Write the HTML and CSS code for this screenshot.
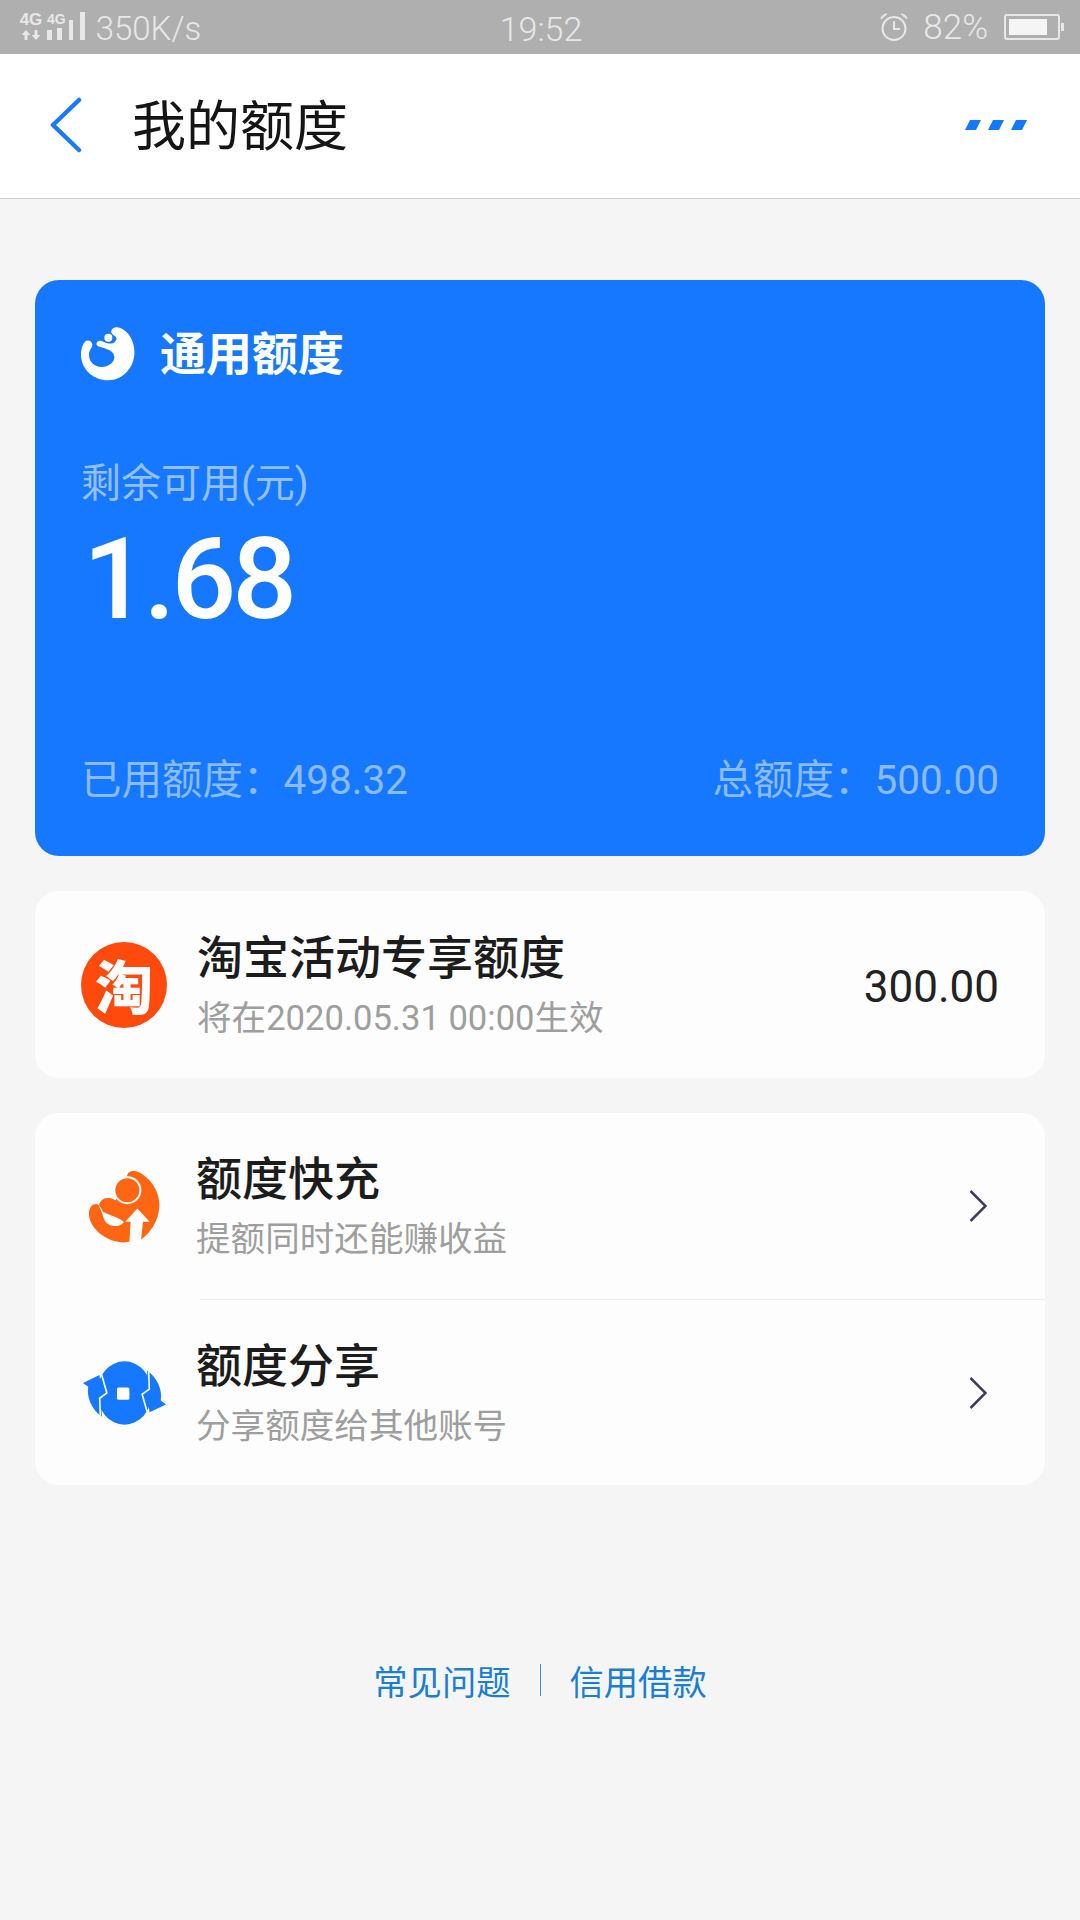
FILE: index.html
```html
<!DOCTYPE html>
<html lang="zh-CN">
<head>
  <meta charset="UTF-8">
  <title>我的额度</title>
  <link rel="stylesheet" href="styles.css">
</head>
<body>
  <div class="statusbar">
    <div class="status-left">
      <div class="net">
        <div class="net-big">4G</div>
        <svg class="net-arrows" width="20" height="10" viewBox="0 0 20 10"><path d="M5 0l4.500 5H6.500v5h-3V5H.5zM15 10l-4.500-5h3V0h3v5h3z" fill="#e8e8e8"/></svg>
      </div>
      <div class="net-small">4G</div>
      <svg class="signal" width="38" height="28" viewBox="0 0 38 28"><path d="M0 18h5v10H0zM10 16h5v12h-5zM22 8h4v20h-4zM33 0h5v28h-5z" fill="#e8e8e8"/></svg>
      <span class="speed">350K/s</span>
    </div>
    <div class="status-time">19:52</div>
    <div class="status-right">
      <svg width="28" height="28" viewBox="0 0 28 28" fill="none" stroke="#e8e8e8"><circle cx="14" cy="15.500" r="11.500" stroke-width="2"/><path d="M14 8v8h6" stroke-width="2"/><path d="M1 6c0-3 3-5 6-5zM27 6c0-3-3-5-6-5z" fill="#e8e8e8" stroke-width="1"/></svg>
      <span class="pct">82%</span>
      <div class="battery"><div class="battery-fill"></div></div>
      <div class="battery-nub"></div>
    </div>
  </div>

  <div class="navbar">
    <svg class="back" width="32" height="56" viewBox="0 0 32 56" fill="none"><path d="M29 3L3 28l26 25" stroke="#1a7afa" stroke-width="4.500" stroke-linecap="round" stroke-linejoin="round"/></svg>
    <div class="nav-title">我的额度</div>
    <svg class="more" width="62" height="10" viewBox="0 0 62 10"><path d="M5 0h11l-5 10H0zM28 0h11l-5 10H23zM51 0h11l-5 10H46z" fill="#1677ff"/></svg>
  </div>

  <div class="main">
    <div class="card quota">
      <div class="quota-head">
        <svg width="54" height="55" viewBox="18 18 162 165"><path d="M112 24C120 16 135 18 148 28 170 44 180 75 178 100 175 145 140 178 100 178 55 178 20 145 18 105 17 88 22 70 30 62 38 55 50 60 52 70 53 80 42 85 42 102 42 122 58 138 80 138 100 138 118 125 118 108 118 92 100 85 85 80 75 77 62 76 65 66 67 58 78 58 85 62 95 67 110 72 120 62 128 54 125 48 115 42 108 37 106 30 112 24Z" fill="#fff"/><circle cx="100" cy="50" r="12" fill="#fff"/></svg>
        <div class="quota-name">通用额度</div>
      </div>
      <div class="quota-label">剩余可用(元)</div>
      <div class="quota-amount">1.68</div>
      <div class="quota-foot">
        <span>已用额度：498.32</span>
        <span>总额度：500.00</span>
      </div>
    </div>

    <div class="card row row-taobao">
      <div class="taobao-logo">淘</div>
      <div class="row-text">
        <div class="row-title">淘宝活动专享额度</div>
        <div class="row-sub">将在2020.05.31 00:00生效</div>
      </div>
      <div class="row-value">300.00</div>
    </div>

    <div class="card">
      <div class="row">
        <div class="row-icon">
          <svg width="71" height="73" viewBox="55 60 213 218"><path d="M172 70C180 58 200 62 215 72 250 95 268 135 266 170 264 210 240 250 208 270L160 277C110 275 60 240 55 195 53 170 70 155 85 165 88 150 105 135 135 150z" fill="#ff6614"/><path d="M84 165C92 172 94 178 96 184 110 192 130 198 150 208L160 216C145 232 118 232 104 214 98 204 96 190 84 165z" fill="#fff"/><circle cx="170" cy="120" r="42" fill="#fff"/><circle cx="170" cy="120" r="36" fill="#ff6614"/><path d="M200 175l37 40h-20l-7 62-34 2 4-64h-16z" fill="#fff"/></svg>
        </div>
        <div class="row-text">
          <div class="row-title">额度快充</div>
          <div class="row-sub">提额同时还能赚收益</div>
        </div>
        <svg class="chevron" width="18" height="32" viewBox="0 0 18 32" fill="none"><path d="M1.500 1l15 15-15 15" stroke="#3e3e5c" stroke-width="2.500"/></svg>
      </div>
      <div class="divider"></div>
      <div class="row">
        <div class="row-icon">
          <svg width="85" height="64" viewBox="32 88 260 196"><ellipse cx="162" cy="186" rx="84" ry="97" fill="#1677ff"/><path d="M35 155l50-24 8 50 14-4-18 24 4 58c-32-22-48-62-42-92z" fill="#1677ff"/><path d="M289 221l-50 24-8-50-14 4 18-24-4-58c32 22 48 62 42 92z" fill="#1677ff"/><path d="M92 130l16 56-22 16 2 54M232 246l-16-56 22-16-2-54" fill="none" stroke="#fff" stroke-width="5"/><rect x="139" y="169" width="38" height="38" rx="5" fill="#fff"/></svg>
        </div>
        <div class="row-text">
          <div class="row-title">额度分享</div>
          <div class="row-sub">分享额度给其他账号</div>
        </div>
        <svg class="chevron" width="18" height="32" viewBox="0 0 18 32" fill="none"><path d="M1.500 1l15 15-15 15" stroke="#3e3e5c" stroke-width="2.500"/></svg>
      </div>
    </div>

    <div class="links">
      <span>常见问题</span>
      <i class="links-sep"></i>
      <span>信用借款</span>
    </div>
  </div>
</body>
</html>
```

FILE: styles.css
```css
* {
  box-sizing: border-box;
}
body {
  margin: 0;
  width: 1080px;
  height: 1920px;
  overflow: hidden;
  background: #f5f5f5;
  font-family: Roboto, "Noto Sans CJK SC", sans-serif;
  color: #1c1c1c;
}

.statusbar {
  display: grid;
  grid-template-columns: 1fr auto 1fr;
  align-items: center;
  height: 54px;
  padding: 0 16px 0 18px;
  background: #afafaf;
  color: #e8e8e8;
  font-family: Roboto, sans-serif;
  font-weight: 300;
  font-size: 34px;
}
.status-left {
  display: flex;
  align-items: flex-start;
  height: 54px;
}
.status-time {
  padding-top: 3px;
}
.net {
  display: flex;
  flex-direction: column;
  align-items: center;
  width: 26px;
  margin: 12px 2px 0 0;
}
.net-big {
  font-family: "Liberation Sans", sans-serif;
  font-weight: 700;
  font-size: 17px;
  line-height: 16px;
}
.net-arrows {
  margin-top: 2px;
}
.net-small {
  margin: 12px 0 0 1px;
  font-family: "Liberation Sans", sans-serif;
  font-weight: 700;
  font-size: 14px;
  line-height: 14px;
}
.signal {
  margin: 12px 0 0 -19px;
}
.speed {
  margin: 9px 0 0 11px;
  font-size: 33px;
  line-height: 40px;
}
.status-right {
  display: flex;
  align-items: center;
  justify-content: flex-end;
}
.pct {
  margin: 0 16px 0 15px;
  font-size: 35px;
}
.battery {
  width: 56px;
  height: 26px;
  padding: 3px;
  border: 2px solid #e8e8e8;
  border-radius: 3px;
}
.battery-fill {
  width: 82%;
  height: 100%;
  background: #f5f5f5;
}
.battery-nub {
  width: 3px;
  height: 8px;
  margin-left: 1px;
  background: #e8e8e8;
}

.navbar {
  display: flex;
  align-items: center;
  height: 145px;
  padding: 0 53px 0 50px;
  background: #fff;
  border-bottom: 1px solid #cfcfcf;
}
.back {
  margin-top: -2px;
}
.nav-title {
  margin: 0 0 8px 50px;
  font-family: "Noto Sans CJK SC", sans-serif;
  font-size: 54px;
  color: #151515;
}
.more {
  margin-left: auto;
  margin-top: -3px;
}

.main {
  display: flex;
  flex-direction: column;
  gap: 35px;
  padding: 81px 35px 0;
}
.card {
  background: #fdfdfd;
  border-radius: 24px;
}

.quota {
  display: flex;
  flex-direction: column;
  height: 576px;
  padding: 46px 46px 0;
  background: #1677ff;
  color: #fff;
}
.quota-head {
  display: flex;
  align-items: center;
  height: 56px;
}
.quota-name {
  margin: 0 0 9px 25px;
  font-family: "Noto Sans CJK SC", sans-serif;
  font-size: 46px;
  font-weight: 700;
}
.quota-label {
  margin-top: 75px;
  font-size: 40px;
  line-height: 54px;
  color: rgba(255, 255, 255, 0.55);
}
.quota-amount {
  margin: 10px 0 0 2px;
  font-family: Roboto, sans-serif;
  font-weight: 500;
  font-size: 114px;
  line-height: 116px;
  letter-spacing: -4px;
}
.quota-foot {
  display: flex;
  justify-content: space-between;
  margin-top: auto;
  margin-bottom: 49px;
  font-size: 40.500px;
  line-height: 54px;
  color: rgba(255, 255, 255, 0.5);
}

.row {
  display: flex;
  align-items: center;
  height: 186px;
  padding: 0 46px 0 0;
}
.row:last-child {
  height: 185px;
}
.row-taobao {
  height: 187px;
  padding-left: 46px;
}
.taobao-logo {
  flex: none;
  width: 86px;
  height: 86px;
  margin-right: 30px;
  border-radius: 50%;
  background: #ff4a0d;
  color: #fff;
  font-family: "Noto Sans CJK SC", sans-serif;
  font-size: 58px;
  font-weight: 900;
  line-height: 84px;
  text-align: center;
}
.row-icon {
  flex: none;
  display: flex;
  justify-content: center;
  width: 86px;
  margin: 0 29px 0 46px;
}
.row-text {
  flex: 1;
  padding-bottom: 4px;
}
.row-title {
  margin-bottom: 8px;
  font-family: "Noto Sans CJK SC", sans-serif;
  font-size: 46px;
  font-weight: 500;
  line-height: 62px;
  color: #1c1c1c;
}
.row-sub {
  font-size: 34.600px;
  line-height: 50px;
  color: #9e9e9e;
}
.row-value {
  margin-top: 4px;
  font-family: Roboto, sans-serif;
  font-weight: 400;
  font-size: 44px;
  color: #222;
}
.chevron {
  margin-right: 12px;
}
.divider {
  height: 1px;
  margin-left: 165px;
  background: #ececec;
}

.links {
  display: flex;
  justify-content: center;
  align-items: center;
  gap: 29px;
  margin-top: 135px;
  font-family: "Noto Sans CJK SC", sans-serif;
  font-size: 34.300px;
  color: #1a7fd0;
}
.links-sep {
  width: 1px;
  height: 32px;
  background: #3a8fd0;
}
```
